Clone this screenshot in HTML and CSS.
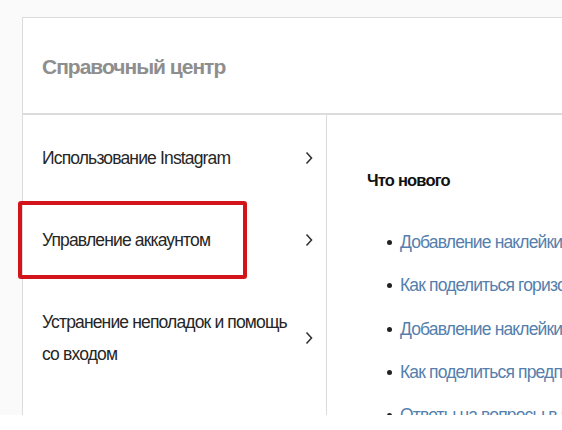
FILE: index.html
```html
<!DOCTYPE html>
<html lang="ru">
<head>
<meta charset="utf-8">
<link rel="stylesheet" href="styles.css">
</head>
<body>
<div class="page">
  <div class="card">
    <header class="card-header">
      <h1 class="title">Справочный центр</h1>
    </header>
    <div class="card-body">
      <nav class="sidebar">
        <a class="nav-item" href="#"><span class="nav-text">Использование Instagram</span><svg class="chev" width="8" height="14" viewBox="0 0 8 14"><polyline points="1.5,1.5 6.5,7 1.5,12.5" fill="none" stroke="#333" stroke-width="1.6"/></svg></a>
        <a class="nav-item" href="#"><span class="nav-text">Управление аккаунтом</span><svg class="chev" width="8" height="14" viewBox="0 0 8 14"><polyline points="1.5,1.5 6.5,7 1.5,12.5" fill="none" stroke="#333" stroke-width="1.6"/></svg></a>
        <a class="nav-item" href="#"><span class="nav-text">Устранение неполадок и помощь со входом</span><svg class="chev" width="8" height="14" viewBox="0 0 8 14"><polyline points="1.5,1.5 6.5,7 1.5,12.5" fill="none" stroke="#333" stroke-width="1.6"/></svg></a>
        <div class="highlight"></div>
      </nav>
      <main class="content">
        <h2 class="section-title">Что нового</h2>
        <ul class="links">
          <li><a href="#">Добавление наклейки с вопросами в истории</a></li>
          <li><a href="#">Как поделиться горизонтальным видео</a></li>
          <li><a href="#">Добавление наклейки с опросом</a></li>
          <li><a href="#">Как поделиться предпросмотром</a></li>
          <li><a href="#">Ответы на вопросы в историях</a></li>
        </ul>
      </main>
    </div>
  </div>
</div>
</body>
</html>
```

FILE: styles.css
```css
html, body {
  margin: 0;
  padding: 0;
  background: #ffffff;
}
body {
  font-family: "Liberation Sans", Arial, sans-serif;
  width: 562px;
  height: 430px;
  overflow: hidden;
}
.page {
  height: 415px;
  background: #fafafa;
  padding: 17px 0 0 22px;
  box-sizing: border-box;
  overflow: hidden;
}
.card {
  width: 600px;
  height: 420px;
  background: #ffffff;
  border: 1px solid #dbdbdb;
  box-sizing: border-box;
}
.card-header {
  height: 95px;
  border-bottom: 2px solid #dcdcdc;
  display: flex;
  align-items: center;
  padding-left: 19px;
}
.title {
  margin: 0;
  font-size: 21px;
  font-weight: bold;
  color: #8e8e8e;
  letter-spacing: -1px;
  padding-top: 2px;
}
.card-body {
  display: flex;
}
.sidebar {
  position: relative;
  flex: none;
  width: 304px;
  border-right: 1px solid #dbdbdb;
  padding-top: 2px;
  box-sizing: border-box;
  height: 320px;
}
.nav-item {
  display: flex;
  align-items: center;
  justify-content: space-between;
  padding: 25px 13px 25px 19px;
  text-decoration: none;
  color: #262626;
}
.nav-text {
  font-size: 17.5px;
  line-height: 32px;
  letter-spacing: -0.85px;
  width: 255px;
}
.chev {
  flex: none;
}
.highlight {
  position: absolute;
  left: -5px;
  top: 86px;
  width: 229px;
  height: 78px;
  border: 4px solid #d4141b;
  border-radius: 3px;
  box-sizing: border-box;
}
.content {
  flex: none;
  padding: 55px 0 0 40px;
}
.section-title {
  margin: 0;
  font-size: 16.5px;
  font-weight: bold;
  color: #111;
  letter-spacing: -0.8px;
  line-height: 20px;
}
.links {
  list-style: none;
  margin: 40px 0 0;
  padding: 0 0 0 20px;
}
.links li {
  position: relative;
  height: 43.3px;
  line-height: 24px;
  padding-left: 13px;
  white-space: nowrap;
  font-size: 17.5px;
  letter-spacing: -0.85px;
}
.links li::before {
  content: "";
  position: absolute;
  left: 0;
  top: 10px;
  width: 5px;
  height: 5px;
  border-radius: 50%;
  background: #222;
}
.links a {
  color: #5580ad;
  text-decoration: none;
}
```
